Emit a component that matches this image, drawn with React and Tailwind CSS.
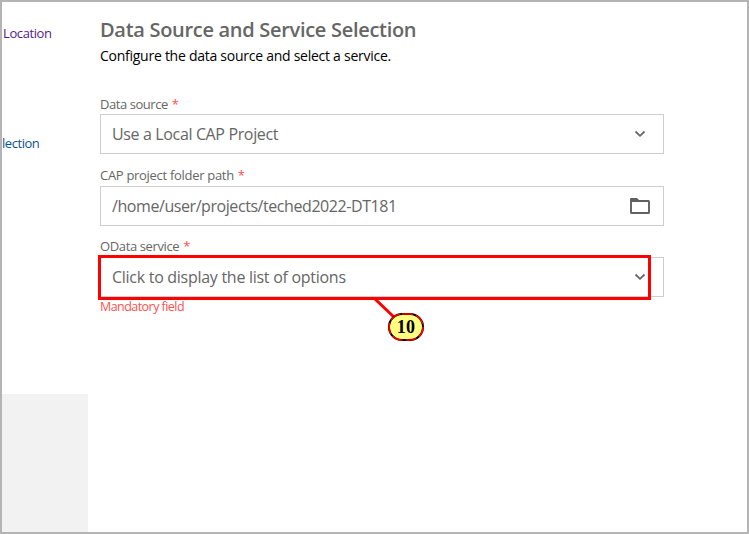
import React from "react";

function Chevron() {
  return (
    <svg className="h-[8px] w-[12px]" viewBox="0 0 12 8" fill="none" stroke="#666" strokeWidth="1.8">
      <path d="M1.5 1.5 6 5.8 10.5 1.5" />
    </svg>
  );
}

function Folder() {
  return (
    <svg className="h-[18px] w-[22px]" viewBox="0 0 22 18">
      <path d="M1 4V2Q1 1 2 1H8L10 3H20V4Z" fill="#616161" />
      <rect x="2" y="4" width="18" height="12" rx="0.6" fill="none" stroke="#616161" strokeWidth="1.9" />
    </svg>
  );
}

function Field({ label, labelClass, rowClass, value, valueClass, icon, iconClass }) {
  return (
    <div className="w-[564px]">
      <div className={`flex h-[22px] items-end text-[13px] whitespace-nowrap text-[#666] ${rowClass}`}>
        <span className={labelClass}>{label}</span>
        <span className="ml-[4px] text-[#ff5050]">*</span>
      </div>
      <div className="flex h-10 items-center justify-between border border-[#cecece] pl-[11px] text-base text-[#666]">
        <span className={`whitespace-nowrap ${valueClass}`}>{value}</span>
        <span className={iconClass}>{icon}</span>
      </div>
    </div>
  );
}

export default function App() {
  return (
    <div className="relative flex h-[534px] w-[749px] overflow-hidden border-2 border-[#b4b4b4] bg-white font-['Open_Sans','Noto_Sans',sans-serif]">
      <aside className="flex w-[86px] shrink-0 flex-col text-[13px] whitespace-nowrap">
        <nav className="h-[392px] pt-[21px]">
          <div className="h-5 pl-px leading-5 tracking-[-0.4px] text-[#551a8b]">Location</div>
          <div className="mt-[90px] h-5 leading-5 tracking-[-0.45px] text-[#0b5394]">lection</div>
        </nav>
        <div className="flex-1 bg-[#f2f2f2]" />
      </aside>
      <main className="pl-[12px] pt-[14px]">
        <h1 className="h-7 text-[20px] leading-7 font-semibold tracking-[-0.3px] whitespace-nowrap text-[#666]">
          Data Source and Service Selection
        </h1>
        <p className="mt-[2px] mb-[26px] h-5 text-[14px] leading-5 tracking-[-0.26px] whitespace-nowrap text-black">
          Configure the data source and select a service.
        </p>
        <div className="flex flex-col">
          <Field label="Data source" rowClass="leading-[19px]" labelClass="tracking-[-0.45px]" value="Use a Local CAP Project" valueClass="tracking-[-0.36px]" icon={<Chevron />} iconClass="mr-[17px] flex" />
          <div className="h-[10px]" />
          <Field label="CAP project folder path" rowClass="leading-[21px]" labelClass="tracking-[-0.3px]" value="/home/user/projects/teched2022-DT181" valueClass="tracking-[-0.43px]" icon={<Folder />} iconClass="mr-[12px] flex" />
          <div className="h-[9px]" />
          <Field label="OData service" rowClass="leading-[21px]" labelClass="tracking-[-0.38px]" value="Click to display the list of options" valueClass="tracking-[-0.28px]" icon={<Chevron />} iconClass="mr-[17px] flex" />
        </div>
        <p className="h-5 text-[12.5px] leading-5 tracking-[-0.55px] text-[#ff5050]">Mandatory field</p>
      </main>
      <div className="absolute top-[253px] left-[96px] h-[45px] w-[553px] border-[3px] border-[#ff0000]" />
      <svg className="absolute top-[296px] left-[366px] h-[28px] w-[40px]" viewBox="0 0 40 28">
        <path d="M7 1 28 21" stroke="#f00" strokeWidth="3" />
      </svg>
      <div className="absolute top-[311px] left-[386px] flex h-[28px] w-[36px] items-center justify-center rounded-[14px] border-2 border-black bg-[#ffff80] font-['Liberation_Serif',serif] text-[18px] leading-none font-bold text-black">
        <svg className="absolute -top-[2px] -left-[2px] h-[28px] w-[36px]" viewBox="0 0 36 28">
          <rect x="1" y="1" width="34" height="26" rx="13" fill="none" stroke="#f00" strokeWidth="1.6" strokeDasharray="11 3" />
        </svg>
        <span className="tracking-[0.3px]">10</span>
      </div>
    </div>
  );
}
